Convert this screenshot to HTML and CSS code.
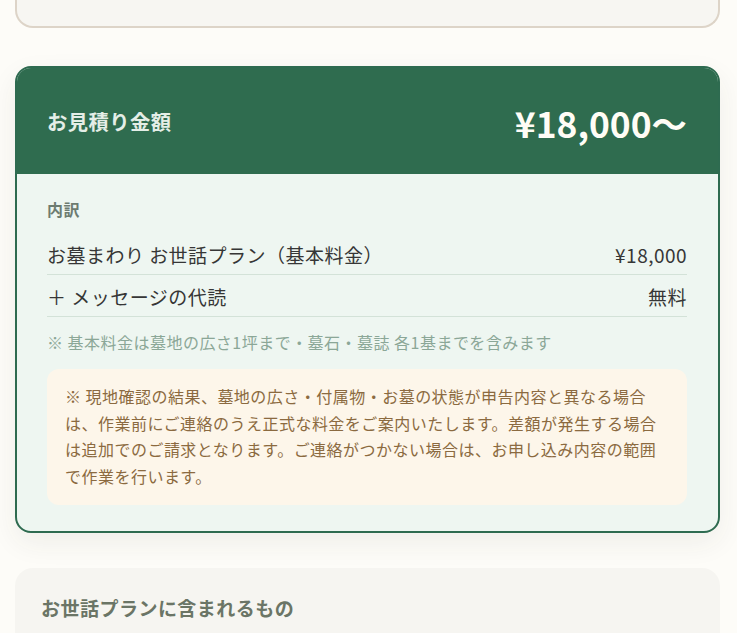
FILE: index.html
```html
<!DOCTYPE html>
<html lang="ja">
<head>
<meta charset="utf-8">
<title>お見積り金額</title>
<link rel="stylesheet" href="styles.css">
</head>
<body>
<div class="page">
  <div class="card-prev"></div>

  <section class="estimate">
    <header class="estimate-head">
      <h2 class="estimate-title">お見積り金額</h2>
      <div class="estimate-price">¥18,000〜</div>
    </header>
    <div class="estimate-body">
      <h3 class="breakdown-title">内訳</h3>
      <div class="row">
        <span class="row-label">お墓まわり お世話プラン（基本料金）</span>
        <span class="row-value">¥18,000</span>
      </div>
      <div class="row">
        <span class="row-label">＋ メッセージの代読</span>
        <span class="row-value">無料</span>
      </div>
      <p class="note">※ 基本料金は墓地の広さ1坪まで・墓石・墓誌 各1基までを含みます</p>
      <div class="warning">※ 現地確認の結果、墓地の広さ・付属物・お墓の状態が申告内容と異なる場合は、作業前にご連絡のうえ正式な料金をご案内いたします。差額が発生する場合は追加でのご請求となります。ご連絡がつかない場合は、お申し込み内容の範囲で作業を行います。</div>
    </div>
  </section>

  <section class="card-next">
    <h3 class="card-next-title">お世話プランに含まれるもの</h3>
  </section>
</div>
</body>
</html>
```

FILE: styles.css
```css
* { box-sizing: border-box; }

html, body {
  margin: 0;
  padding: 0;
  background: #fdfcf8;
}

body {
  font-family: "Noto Sans CJK JP", "Noto Sans", sans-serif;
  color: #3a3a3a;
  letter-spacing: 0.03em;
}

.page {
  padding: 0 17px 0 15px;
}

.card-prev {
  height: 28px;
  background: #f7f6f2;
  border: 2px solid #ddd4c8;
  border-top: none;
  border-radius: 0 0 18px 18px;
}

.estimate {
  margin-top: 38px;
  border: 2px solid #2e6b50;
  border-radius: 16px;
  overflow: hidden;
  background: #eef6f1;
  box-shadow: 0 10px 28px rgba(60, 60, 40, 0.07);
}

.estimate-head {
  background: #2f6c4f;
  min-height: 106px;
  padding: 0 31px 0 30px;
  display: flex;
  align-items: center;
  justify-content: space-between;
}

.estimate-title {
  margin: 0;
  font-size: 20.3px;
  font-weight: 700;
  color: #e4eee7;
}

.estimate-price {
  font-size: 35.4px;
  font-weight: 700;
  color: #fffdf6;
  letter-spacing: 0;
  line-height: 1.2;
  padding-top: 4px;
}

.estimate-body {
  padding: 23px 31px 26px 30px;
}

.breakdown-title {
  margin: 0 0 12px;
  font-size: 16px;
  font-weight: 700;
  line-height: 24px;
  color: #6d7c71;
}

.row {
  display: flex;
  justify-content: space-between;
  align-items: center;
  padding: 8px 0 6px;
  font-size: 19px;
  line-height: 27px;
  color: #363636;
  border-bottom: 1px solid #d3e2d8;
}

.note {
  margin: 13px 0 0;
  font-size: 16px;
  line-height: 24px;
  color: #8ba797;
}

.warning {
  margin-top: 15px;
  padding: 14px 18px 15px;
  background: #fdf6ea;
  border-radius: 12px;
  font-size: 16px;
  line-height: 26.7px;
  color: #8b6a40;
}

.card-next {
  margin-top: 35px;
  background: #f6f5f1;
  border-radius: 18px 18px 0 0;
  padding: 25px 26px 30px;
}

.card-next-title {
  margin: 0;
  font-size: 19px;
  font-weight: 700;
  line-height: 30px;
  color: #6b7566;
}
```
